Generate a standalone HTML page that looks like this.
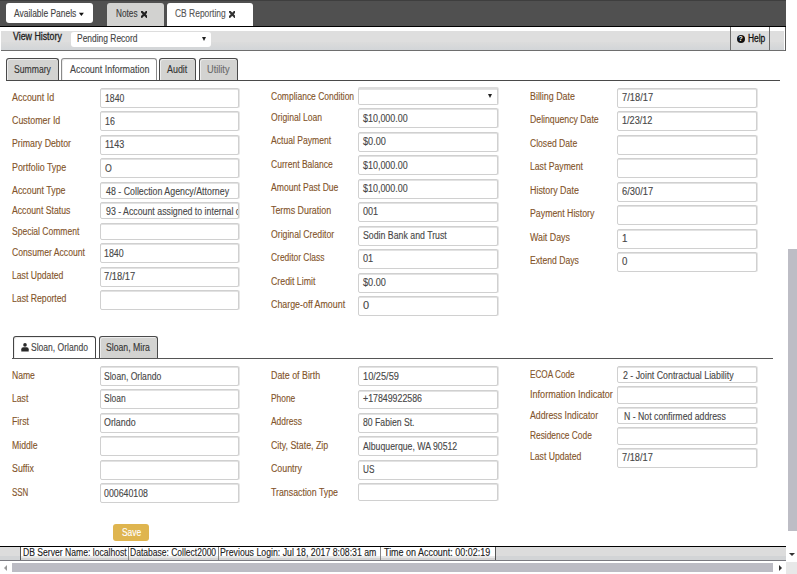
<!DOCTYPE html>
<html><head><meta charset="utf-8">
<style>
*{box-sizing:border-box;margin:0;padding:0}
html,body{width:797px;height:574px;overflow:hidden;background:#fff;font-family:"Liberation Sans",sans-serif;font-size:9px;color:#333}
.a{position:absolute}
.t{position:absolute;line-height:11px;white-space:nowrap;-webkit-text-stroke:0.12px currentColor}
.lb{position:absolute;color:#83542a;-webkit-text-stroke:0.12px #83542a;font-size:10px;line-height:11px;white-space:nowrap}
.ip{position:absolute;border:1px solid #d0d0d0;border-radius:2px;background:#fff;overflow:hidden;box-shadow:inset 0 1px 0 #e2e2e2,1px 0 0 #e6e6e6}
.tv{position:absolute;color:#474747;-webkit-text-stroke:0.12px #474747;font-size:10px;line-height:11px;white-space:nowrap}
.sel{border-top:2px solid #dcdcdc}
.arr{position:absolute;right:5px;top:5px;width:0;height:0;border-left:2px solid transparent;border-right:2px solid transparent;border-top:4px solid #222}
#topbar{left:0;top:0;width:786px;height:27px;background:#505050;border-top:1px solid #3e3e3e;border-bottom:1px solid #000}
.btn{position:absolute;background:#fff;border-radius:3px}
.ttab{position:absolute;top:3px;height:23px;border-radius:3px 3px 0 0}
.tab{position:absolute;top:57.5px;height:23px;border:1px solid #4a4a4a;border-bottom:none;border-radius:3px 3px 0 0;background:#d3d3d1;box-shadow:inset 1px 1px 0 #ececec}
</style></head><body>
<div id="topbar" class="a"></div>
<div class="btn" style="left:6px;top:3px;width:87px;height:20px"></div>
<div class="t" style="left:14.40px;top:8px;font-size:10.0px;font-weight:normal;color:#444;transform:scaleX(0.8446);transform-origin:0 0">Available Panels</div>
<svg class="a" style="left:78px;top:12px" width="8" height="5" viewBox="0 0 8 5"><path d="M0.9 0.7 L5.9 0.7 L3.4 3.9 Z" fill="#111"/></svg>
<div class="ttab" style="left:107px;width:56.5px;background:#d2d2d0"></div>
<div class="t" style="left:115.50px;top:8px;font-size:10.0px;font-weight:normal;color:#3a3a3a;transform:scaleX(0.8230);transform-origin:0 0">Notes</div>
<svg class="a" style="left:140.6px;top:11.2px" width="6.5" height="6.5" viewBox="0 0 6 6"><path d="M0.8 0.8 L5.2 5.2 M5.2 0.8 L0.8 5.2" stroke="#222" stroke-width="2.1" stroke-linecap="square"/></svg>
<div class="ttab" style="left:167px;width:85.5px;background:#fff"></div>
<div class="t" style="left:174.60px;top:8px;font-size:10.0px;font-weight:normal;color:#555;transform:scaleX(0.8446);transform-origin:0 0">CB Reporting</div>
<svg class="a" style="left:228.6px;top:11.2px" width="6.5" height="6.5" viewBox="0 0 6 6"><path d="M0.8 0.8 L5.2 5.2 M5.2 0.8 L0.8 5.2" stroke="#333" stroke-width="2.1" stroke-linecap="square"/></svg>

<!-- view history bar -->
<div class="a" style="left:1px;top:31px;width:785px;height:20px;background:#dedede;border-bottom:1px solid #6e6e6e"></div>
<div class="a" style="left:1px;top:42px;width:784px;height:8px;background:linear-gradient(#dcdcdc,#d2d5d8)"></div>
<div class="t" style="left:12.60px;top:31px;font-size:10.0px;font-weight:normal;color:#222;-webkit-text-stroke:0.3px currentColor;transform:scaleX(0.8810);transform-origin:0 0">View History</div>
<div class="a" style="left:71px;top:30.5px;width:140px;height:16.5px;background:#fff;border-radius:3px;border-top:1px solid #ddd"></div>
<div class="t" style="left:77.40px;top:33px;font-size:10.0px;font-weight:normal;color:#444;transform:scaleX(0.8436);transform-origin:0 0">Pending Record</div>
<span class="a" style="left:202px;top:37px;border-left:2px solid transparent;border-right:2px solid transparent;border-top:4px solid #222"></span>
<div class="a" style="left:730px;top:27px;width:1px;height:24px;background:#6e6e6e"></div>

<div class="a" style="left:769px;top:27px;width:1px;height:24px;background:#6e6e6e"></div>
<div class="a" style="left:784px;top:31px;width:1px;height:19px;background:#fff"></div><div class="a" style="left:785px;top:27px;width:1px;height:24px;background:#5e5e5e"></div>
<div class="a" style="left:736.5px;top:34.5px;width:8.5px;height:8.5px;border-radius:50%;background:#111;color:#fff;font-size:7px;line-height:8.5px;text-align:center;font-weight:bold">?</div>
<div class="t" style="left:747.60px;top:33px;font-size:10.0px;font-weight:normal;color:#111;-webkit-text-stroke:0.3px currentColor;transform:scaleX(0.8407);transform-origin:0 0">Help</div>

<!-- tabs -->
<div class="tab" style="left:6px;width:53px"></div>
<div class="tab" style="left:61px;width:95.5px;background:#fff;border-color:#8a8a8a;height:23px"></div>
<div class="tab" style="left:158.5px;width:37px"></div>
<div class="tab" style="left:198.5px;width:39px"></div>
<div class="a" style="left:6px;top:80px;width:773.5px;height:1px;background:#4a4a4a"></div>
<div class="t" style="left:14.10px;top:64px;font-size:10.0px;font-weight:normal;color:#333;transform:scaleX(0.8622);transform-origin:0 0">Summary</div>
<div class="t" style="left:69.50px;top:64px;font-size:10.0px;font-weight:normal;color:#444;transform:scaleX(0.8928);transform-origin:0 0">Account Information</div>
<div class="t" style="left:167.40px;top:64px;font-size:10.0px;font-weight:normal;color:#333;transform:scaleX(0.8905);transform-origin:0 0">Audit</div>
<div class="t" style="left:206.80px;top:64px;font-size:10.0px;font-weight:normal;color:#6a6a6a;transform:scaleX(0.9201);transform-origin:0 0">Utility</div>

<div class="lb" style="left:12px;top:92px;letter-spacing:0.0px;transform:scaleX(0.8928);transform-origin:0 0">Account Id</div>
<div class="ip" style="left:100px;top:88px;width:139px;height:20px"><span class="tv" style="left:3.50px;top:4.00px;letter-spacing:0.0px;transform:scaleX(0.8674);transform-origin:0 0">1840</span></div>
<div class="lb" style="left:12px;top:115px;letter-spacing:0.0px;transform:scaleX(0.8867);transform-origin:0 0">Customer Id</div>
<div class="ip" style="left:100px;top:111px;width:139px;height:20px"><span class="tv" style="left:3.50px;top:4.00px;letter-spacing:0.0px;transform:scaleX(0.8809);transform-origin:0 0">16</span></div>
<div class="lb" style="left:12px;top:138px;letter-spacing:0.0px;transform:scaleX(0.8773);transform-origin:0 0">Primary Debtor</div>
<div class="ip" style="left:100px;top:135px;width:139px;height:20px"><span class="tv" style="left:3.50px;top:3.00px;letter-spacing:0.0px;transform:scaleX(0.8970);transform-origin:0 0">1143</span></div>
<div class="lb" style="left:12px;top:162px;letter-spacing:0.0px;transform:scaleX(0.8890);transform-origin:0 0">Portfolio Type</div>
<div class="ip" style="left:100px;top:158px;width:139px;height:20px"><span class="tv" style="left:3.50px;top:4.00px;letter-spacing:0.0px;transform:scaleX(0.8739);transform-origin:0 0">O</span></div>
<div class="lb" style="left:12px;top:185px;letter-spacing:0.0px;transform:scaleX(0.8854);transform-origin:0 0">Account Type</div>
<div class="ip" style="left:100px;top:182px;width:139px;height:17px"><span class="tv" style="left:4.50px;top:3.00px;letter-spacing:0.0px;transform:scaleX(0.8822);transform-origin:0 0">48 - Collection Agency/Attorney</span></div>
<div class="lb" style="left:12px;top:205px;letter-spacing:0.0px;transform:scaleX(0.8667);transform-origin:0 0">Account Status</div>
<div class="ip" style="left:100px;top:202px;width:139px;height:17px"><span class="tv" style="left:4.50px;top:3.00px;letter-spacing:0.0px;transform:scaleX(0.8781);transform-origin:0 0">93 - Account assigned to internal collection</span></div>
<div class="lb" style="left:12px;top:226px;letter-spacing:0.0px;transform:scaleX(0.8527);transform-origin:0 0">Special Comment</div>
<div class="ip" style="left:100px;top:223px;width:139px;height:17px"></div>
<div class="lb" style="left:12px;top:247px;letter-spacing:0.0px;transform:scaleX(0.8639);transform-origin:0 0">Consumer Account</div>
<div class="ip" style="left:100px;top:243px;width:139px;height:20px"><span class="tv" style="left:3.30px;top:4.00px;letter-spacing:0.0px;transform:scaleX(0.8854);transform-origin:0 0">1840</span></div>
<div class="lb" style="left:12px;top:270px;letter-spacing:0.0px;transform:scaleX(0.8639);transform-origin:0 0">Last Updated</div>
<div class="ip" style="left:100px;top:267px;width:139px;height:20px"><span class="tv" style="left:3.30px;top:3.00px;letter-spacing:0.0px;transform:scaleX(0.9378);transform-origin:0 0">7/18/17</span></div>
<div class="lb" style="left:12px;top:293px;letter-spacing:0.0px;transform:scaleX(0.8659);transform-origin:0 0">Last Reported</div>
<div class="ip" style="left:100px;top:290px;width:139px;height:20px"></div>
<div class="lb" style="left:271.3px;top:91px;letter-spacing:0.0px;transform:scaleX(0.8493);transform-origin:0 0">Compliance Condition</div>
<div class="ip sel" style="left:358px;top:87px;width:140px;height:18px"><span class="arr"></span></div>
<div class="lb" style="left:271.3px;top:112px;letter-spacing:0.0px;transform:scaleX(0.8590);transform-origin:0 0">Original Loan</div>
<div class="ip" style="left:358px;top:108px;width:140px;height:20px"><span class="tv" style="left:3.60px;top:4.00px;letter-spacing:0.0px;transform:scaleX(0.8929);transform-origin:0 0">$10,000.00</span></div>
<div class="lb" style="left:271.3px;top:135px;letter-spacing:0.0px;transform:scaleX(0.8580);transform-origin:0 0">Actual Payment</div>
<div class="ip" style="left:358px;top:132px;width:140px;height:20px"><span class="tv" style="left:3.60px;top:3.00px;letter-spacing:0.0px;transform:scaleX(0.9149);transform-origin:0 0">$0.00</span></div>
<div class="lb" style="left:271.3px;top:159px;letter-spacing:0.0px;transform:scaleX(0.8552);transform-origin:0 0">Current Balance</div>
<div class="ip" style="left:358px;top:155px;width:140px;height:20px"><span class="tv" style="left:3.60px;top:4.00px;letter-spacing:0.0px;transform:scaleX(0.8929);transform-origin:0 0">$10,000.00</span></div>
<div class="lb" style="left:271.3px;top:182px;letter-spacing:0.0px;transform:scaleX(0.8600);transform-origin:0 0">Amount Past Due</div>
<div class="ip" style="left:358px;top:179px;width:140px;height:20px"><span class="tv" style="left:3.60px;top:3.00px;letter-spacing:0.0px;transform:scaleX(0.8929);transform-origin:0 0">$10,000.00</span></div>
<div class="lb" style="left:271.3px;top:205px;letter-spacing:0.0px;transform:scaleX(0.8863);transform-origin:0 0">Terms Duration</div>
<div class="ip" style="left:358px;top:202px;width:140px;height:20px"><span class="tv" style="left:3.60px;top:3.00px;letter-spacing:0.0px;transform:scaleX(0.9049);transform-origin:0 0">001</span></div>
<div class="lb" style="left:271.3px;top:229px;letter-spacing:0.0px;transform:scaleX(0.8680);transform-origin:0 0">Original Creditor</div>
<div class="ip" style="left:358px;top:226px;width:140px;height:20px"><span class="tv" style="left:3.60px;top:3.00px;letter-spacing:0.0px;transform:scaleX(0.8763);transform-origin:0 0">Sodin Bank and Trust</span></div>
<div class="lb" style="left:271.3px;top:252px;letter-spacing:0.0px;transform:scaleX(0.8428);transform-origin:0 0">Creditor Class</div>
<div class="ip" style="left:358px;top:249px;width:140px;height:20px"><span class="tv" style="left:3.60px;top:3.00px;letter-spacing:0.0px;transform:scaleX(0.9169);transform-origin:0 0">01</span></div>
<div class="lb" style="left:271.3px;top:276px;letter-spacing:0.0px;transform:scaleX(0.8778);transform-origin:0 0">Credit Limit</div>
<div class="ip" style="left:358px;top:273px;width:140px;height:20px"><span class="tv" style="left:3.60px;top:3.00px;letter-spacing:0.0px;transform:scaleX(0.9149);transform-origin:0 0">$0.00</span></div>
<div class="lb" style="left:271.3px;top:299px;letter-spacing:0.0px;transform:scaleX(0.8846);transform-origin:0 0">Charge-off Amount</div>
<div class="ip" style="left:358px;top:296px;width:140px;height:20px"><span class="tv" style="left:3.60px;top:3.00px;letter-spacing:0.0px;transform:scaleX(1.0966);transform-origin:0 0">0</span></div>
<div class="lb" style="left:529.6px;top:91px;letter-spacing:0.0px;transform:scaleX(0.8875);transform-origin:0 0">Billing Date</div>
<div class="ip" style="left:617px;top:88px;width:140px;height:20px"><span class="tv" style="left:3.60px;top:3.00px;letter-spacing:0.0px;transform:scaleX(0.9318);transform-origin:0 0">7/18/17</span></div>
<div class="lb" style="left:529.6px;top:114px;letter-spacing:0.0px;transform:scaleX(0.8703);transform-origin:0 0">Delinquency Date</div>
<div class="ip" style="left:617px;top:111px;width:140px;height:20px"><span class="tv" style="left:4.30px;top:3.00px;letter-spacing:0.0px;transform:scaleX(0.9109);transform-origin:0 0">1/23/12</span></div>
<div class="lb" style="left:529.6px;top:138px;letter-spacing:0.0px;transform:scaleX(0.8577);transform-origin:0 0">Closed Date</div>
<div class="ip" style="left:617px;top:135px;width:140px;height:20px"></div>
<div class="lb" style="left:529.6px;top:161px;letter-spacing:0.0px;transform:scaleX(0.8650);transform-origin:0 0">Last Payment</div>
<div class="ip" style="left:617px;top:158px;width:140px;height:20px"></div>
<div class="lb" style="left:529.6px;top:185px;letter-spacing:0.0px;transform:scaleX(0.8888);transform-origin:0 0">History Date</div>
<div class="ip" style="left:617px;top:182px;width:140px;height:20px"><span class="tv" style="left:3.60px;top:3.00px;letter-spacing:0.0px;transform:scaleX(0.9318);transform-origin:0 0">6/30/17</span></div>
<div class="lb" style="left:529.6px;top:208px;letter-spacing:0.0px;transform:scaleX(0.8779);transform-origin:0 0">Payment History</div>
<div class="ip" style="left:617px;top:205px;width:140px;height:20px"></div>
<div class="lb" style="left:529.6px;top:232px;letter-spacing:0.0px;transform:scaleX(0.8827);transform-origin:0 0">Wait Days</div>
<div class="ip" style="left:617px;top:229px;width:140px;height:20px"><span class="tv" style="left:3.60px;top:3.00px;letter-spacing:0.0px;transform:scaleX(0.9708);transform-origin:0 0">1</span></div>
<div class="lb" style="left:529.6px;top:255px;letter-spacing:0.0px;transform:scaleX(0.8624);transform-origin:0 0">Extend Days</div>
<div class="ip" style="left:617px;top:252px;width:140px;height:20px"><span class="tv" style="left:3.60px;top:3.00px;letter-spacing:0.0px;transform:scaleX(0.9708);transform-origin:0 0">0</span></div>
<div class="lb" style="left:12.4px;top:370px;letter-spacing:0.0px;transform:scaleX(0.8581);transform-origin:0 0">Name</div>
<div class="ip" style="left:100px;top:366px;width:139px;height:20px"><span class="tv" style="left:2.90px;top:4.00px;letter-spacing:0.0px;transform:scaleX(0.8573);transform-origin:0 0">Sloan, Orlando</span></div>
<div class="lb" style="left:12.4px;top:393px;letter-spacing:0.0px;transform:scaleX(0.8621);transform-origin:0 0">Last</div>
<div class="ip" style="left:100px;top:389px;width:139px;height:20px"><span class="tv" style="left:2.90px;top:3.00px;letter-spacing:0.0px;transform:scaleX(0.8445);transform-origin:0 0">Sloan</span></div>
<div class="lb" style="left:12.4px;top:416px;letter-spacing:0.0px;transform:scaleX(0.8739);transform-origin:0 0">First</div>
<div class="ip" style="left:100px;top:413px;width:139px;height:20px"><span class="tv" style="left:2.90px;top:3.00px;letter-spacing:0.0px;transform:scaleX(0.8882);transform-origin:0 0">Orlando</span></div>
<div class="lb" style="left:12.4px;top:440px;letter-spacing:0.0px;transform:scaleX(0.8653);transform-origin:0 0">Middle</div>
<div class="ip" style="left:100px;top:436px;width:139px;height:20px"></div>
<div class="lb" style="left:12.4px;top:463px;letter-spacing:0.0px;transform:scaleX(0.8815);transform-origin:0 0">Suffix</div>
<div class="ip" style="left:100px;top:460px;width:139px;height:20px"></div>
<div class="lb" style="left:12.4px;top:487px;letter-spacing:0.0px;transform:scaleX(0.7927);transform-origin:0 0">SSN</div>
<div class="ip" style="left:100px;top:483px;width:139px;height:20px"><span class="tv" style="left:2.90px;top:4.00px;letter-spacing:0.0px;transform:scaleX(0.8769);transform-origin:0 0">000640108</span></div>
<div class="lb" style="left:271.2px;top:370px;letter-spacing:0.0px;transform:scaleX(0.8850);transform-origin:0 0">Date of Birth</div>
<div class="ip" style="left:358px;top:366px;width:140px;height:20px"><span class="tv" style="left:4.10px;top:4.00px;letter-spacing:0.0px;transform:scaleX(0.9220);transform-origin:0 0">10/25/59</span></div>
<div class="lb" style="left:271.2px;top:393px;letter-spacing:0.0px;transform:scaleX(0.8402);transform-origin:0 0">Phone</div>
<div class="ip" style="left:358px;top:390px;width:140px;height:19px"><span class="tv" style="left:4.10px;top:2.00px;letter-spacing:0.0px;transform:scaleX(0.8802);transform-origin:0 0">+17849922586</span></div>
<div class="lb" style="left:271.2px;top:416px;letter-spacing:0.0px;transform:scaleX(0.8422);transform-origin:0 0">Address</div>
<div class="ip" style="left:358px;top:413px;width:140px;height:20px"><span class="tv" style="left:4.10px;top:3.00px;letter-spacing:0.0px;transform:scaleX(0.8658);transform-origin:0 0">80 Fabien St.</span></div>
<div class="lb" style="left:271.2px;top:440px;letter-spacing:0.0px;transform:scaleX(0.8821);transform-origin:0 0">City, State, Zip</div>
<div class="ip" style="left:358px;top:436px;width:140px;height:20px"><span class="tv" style="left:4.10px;top:4.00px;letter-spacing:0.0px;transform:scaleX(0.8718);transform-origin:0 0">Albuquerque, WA 90512</span></div>
<div class="lb" style="left:271.2px;top:463px;letter-spacing:0.0px;transform:scaleX(0.8825);transform-origin:0 0">Country</div>
<div class="ip" style="left:358px;top:460px;width:140px;height:20px"><span class="tv" style="left:4.10px;top:3.00px;letter-spacing:0.0px;transform:scaleX(0.8198);transform-origin:0 0">US</span></div>
<div class="lb" style="left:271.2px;top:487px;letter-spacing:0.0px;transform:scaleX(0.8798);transform-origin:0 0">Transaction Type</div>
<div class="ip" style="left:358px;top:483px;width:140px;height:18px"></div>
<div class="lb" style="left:529.8px;top:369px;letter-spacing:0.0px;transform:scaleX(0.8186);transform-origin:0 0">ECOA Code</div>
<div class="ip" style="left:617px;top:366px;width:140px;height:17px"><span class="tv" style="left:5.20px;top:3.00px;letter-spacing:0.0px;transform:scaleX(0.8804);transform-origin:0 0">2 - Joint Contractual Liability</span></div>
<div class="lb" style="left:529.8px;top:389px;letter-spacing:0.0px;transform:scaleX(0.9093);transform-origin:0 0">Information Indicator</div>
<div class="ip" style="left:617px;top:386px;width:140px;height:18px"></div>
<div class="lb" style="left:529.8px;top:410px;letter-spacing:0.0px;transform:scaleX(0.8750);transform-origin:0 0">Address Indicator</div>
<div class="ip" style="left:617px;top:407px;width:140px;height:17px"><span class="tv" style="left:5.80px;top:3.00px;letter-spacing:0.0px;transform:scaleX(0.8722);transform-origin:0 0">N - Not confirmed address</span></div>
<div class="lb" style="left:529.8px;top:430px;letter-spacing:0.0px;transform:scaleX(0.8358);transform-origin:0 0">Residence Code</div>
<div class="ip" style="left:617px;top:427px;width:140px;height:18px"></div>
<div class="lb" style="left:529.8px;top:451px;letter-spacing:0.0px;transform:scaleX(0.8622);transform-origin:0 0">Last Updated</div>
<div class="ip" style="left:617px;top:448px;width:140px;height:20px"><span class="tv" style="left:3.90px;top:3.00px;letter-spacing:0.0px;transform:scaleX(0.9258);transform-origin:0 0">7/18/17</span></div>

<!-- section 2 tabs -->
<div class="tab" style="left:12.5px;top:336px;width:83.5px;height:23px;background:#fff;border-color:#444"></div>
<svg class="a" style="left:21px;top:343px" width="8" height="9" viewBox="0 0 8 9"><circle cx="4" cy="1.9" r="1.8" fill="#2a2a2a"/><path d="M0.3 8.6 L0.3 6.3 Q0.3 4.2 2.3 4.2 L5.7 4.2 Q7.7 4.2 7.7 6.3 L7.7 8.6 Z" fill="#2a2a2a"/></svg>
<div class="tab" style="left:98.5px;top:336px;width:59.5px;height:22.5px"></div>
<div class="a" style="left:12px;top:358px;width:761px;height:1px;background:#555"></div>
<div class="t" style="left:31.20px;top:342px;font-size:10.0px;font-weight:normal;color:#444;transform:scaleX(0.8543);transform-origin:0 0">Sloan, Orlando</div>
<div class="t" style="left:106.20px;top:342px;font-size:10.0px;font-weight:normal;color:#333;transform:scaleX(0.8680);transform-origin:0 0">Sloan, Mira</div>

<!-- save -->
<div class="a" style="left:113px;top:524px;width:35.5px;height:16.5px;background:#dfb54f;border-radius:3px"></div>
<div class="t" style="left:121.60px;top:527px;font-size:10.0px;font-weight:normal;color:#fff;transform:scaleX(0.8422);transform-origin:0 0">Save</div>

<!-- status bar -->
<div class="a" style="left:0;top:545.5px;width:786px;height:1.5px;background:#000"></div>
<div class="a" style="left:0;top:547px;width:786px;height:14px;background:#dcdcdc;border-bottom:1px solid #7a7a80"></div>
<div class="a" style="left:0;top:556px;width:786px;height:4px;background:#d2d4d6"></div>
<div class="a" style="left:21px;top:547px;width:474px;height:13px;background:linear-gradient(#fff 0,#fff 9px,#ebebeb 9px,#e6e6e6 11px,#d4d4d4 11px)"></div>
<div class="a" style="left:20px;top:547px;width:1px;height:13px;background:#555"></div>
<div class="a" style="left:128px;top:547px;width:1px;height:13px;background:#888"></div>
<div class="a" style="left:218px;top:547px;width:1px;height:13px;background:#888"></div>
<div class="a" style="left:379.5px;top:547px;width:1px;height:13px;background:#888"></div>
<div class="a" style="left:495px;top:547px;width:1px;height:13px;background:#555"></div>
<div class="t" style="left:23.20px;top:547px;font-size:10.0px;font-weight:normal;color:#222;transform:scaleX(0.8598);transform-origin:0 0">DB Server Name: localhost</div>
<div class="t" style="left:130.40px;top:547px;font-size:10.0px;font-weight:normal;color:#222;transform:scaleX(0.8509);transform-origin:0 0">Database: Collect2000</div>
<div class="t" style="left:220.40px;top:547px;font-size:10.0px;font-weight:normal;color:#222;transform:scaleX(0.8737);transform-origin:0 0">Previous Login: Jul 18, 2017 8:08:31 am</div>
<div class="t" style="left:384.00px;top:547px;font-size:10.0px;font-weight:normal;color:#222;transform:scaleX(0.8947);transform-origin:0 0">Time on Account: 00:02:19</div>
<span class="a" style="left:789px;top:552.5px;border-left:3px solid transparent;border-right:3px solid transparent;border-top:3.5px solid #333"></span>

<!-- h scrollbar -->
<div class="a" style="left:0;top:562px;width:786px;height:12px;background:#fff"></div>
<div class="a" style="left:12px;top:563px;width:761px;height:9px;background:#bcbcc4"></div>
<span class="a" style="left:3.5px;top:564.5px;border-top:3px solid transparent;border-bottom:3px solid transparent;border-right:3.5px solid #999"></span>
<span class="a" style="left:778.5px;top:564.5px;border-top:3px solid transparent;border-bottom:3px solid transparent;border-left:3.5px solid #333"></span>
<div class="a" style="left:786px;top:562px;width:11px;height:12px;background:#e8e8e8"></div>

<!-- v scrollbar thumb -->
<div class="a" style="left:787.5px;top:248.5px;width:9.5px;height:282px;background:#bdbdc5"></div>
</body></html>
